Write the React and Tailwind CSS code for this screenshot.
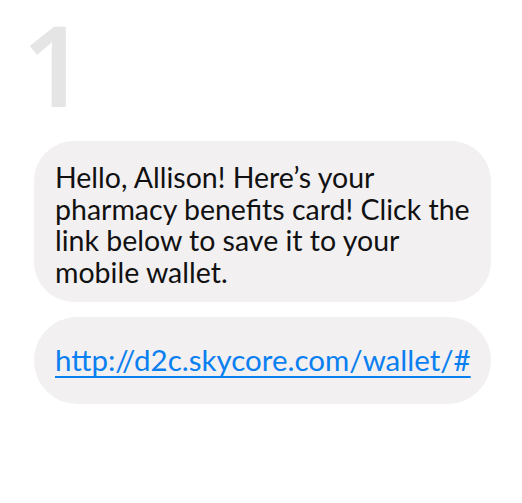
export default function App() {
  return (
    <div className="w-[522px] h-[503px] bg-white flex flex-col">
      <div className="h-[141px] pl-[22px] pt-[4px]">
        <span className="block text-[112px] leading-[120px] font-semibold text-[#e5e5e5] font-['Noto_Sans',sans-serif]">1</span>
      </div>
      <div className="ml-[34px] w-[457px] flex flex-col gap-[15px] font-['Lato',sans-serif]">
        <div className="bg-[#f2f0f1] rounded-[40px] h-[161px] pl-[21px] pr-[16px] pt-[21px] text-[28.5px] leading-[31.5px] text-[#111111]">
          Hello, Allison! Here’s your pharmacy benefits card! Click the link below to save it to your mobile wallet.
        </div>
        <div className="bg-[#f2f0f1] rounded-[44px] h-[87px] pl-[21px] flex items-center">
          <a href="#" className="text-[29.5px] text-[#0a7ff0] underline decoration-[1.5px] underline-offset-[5px]">http://d2c.skycore.com/wallet/#</a>
        </div>
      </div>
    </div>
  );
}
